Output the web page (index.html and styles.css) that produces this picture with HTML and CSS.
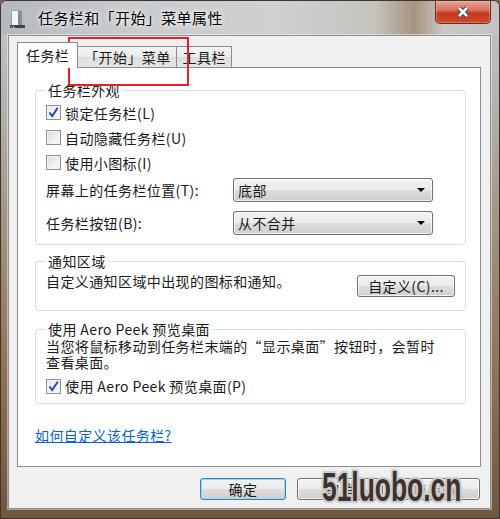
FILE: index.html
```html
<!DOCTYPE html>
<html lang="zh-CN">
<head>
    <meta charset="UTF-8">
    <meta name="viewport" content="width=device-width, initial-scale=1.0">
    <title>任务栏和「开始」菜单属性</title>
    <link rel="stylesheet" href="styles.css">
</head>
<body>
    <div class="window">
        <div class="titlebar">
            <svg class="app-icon" width="15" height="19" viewBox="0 0 15 19">
                <rect x="1.5" y="0.5" width="10" height="15" fill="#f6f6f6" stroke="#a0a0a0"/>
                <rect x="8" y="1" width="3.5" height="14" fill="#8a8a8a"/>
                <rect x="0" y="15" width="15" height="3" fill="#3c434c"/>
                <rect x="1" y="15.5" width="1.5" height="1" fill="#e0522e"/>
                <rect x="3" y="15.5" width="1.5" height="1" fill="#6cbf3a"/>
                <rect x="1" y="17" width="1.5" height="1" fill="#2f8ee0"/>
                <rect x="3" y="17" width="1.5" height="1" fill="#f2c12e"/>
            </svg>
            <span class="title">任务栏和「开始」菜单属性</span>
            <div class="close-btn">
                <svg width="16" height="12" viewBox="0 0 16 12">
                    <path d="M4 2 L12 10 M12 2 L4 10" stroke="#45454f" stroke-width="5"/>
                    <path d="M4 2 L12 10 M12 2 L4 10" stroke="#ffffff" stroke-width="2.6"/>
                </svg>
            </div>
        </div>

        <div class="client">
            <div class="tabs">
                <div class="tab active">任务栏</div>
                <div class="tab">「开始」菜单</div>
                <div class="tab">工具栏</div>
            </div>

            <div class="panel">
                <!-- 任务栏外观 -->
                <fieldset class="group group-look">
                    <legend>任务栏外观</legend>
                    <div class="check-row first">
                        <span class="checkbox checked">
                            <svg width="13" height="13" viewBox="0 0 13 13"><path d="M2.5 6.5 L5.2 10 L10.8 1.8" fill="none" stroke="#2b4c9e" stroke-width="2"/></svg>
                        </span>
                        锁定任务栏(L)
                    </div>
                    <div class="check-row"><span class="checkbox"></span>自动隐藏任务栏(U)</div>
                    <div class="check-row"><span class="checkbox"></span>使用小图标(I)</div>
                    <div class="select-row first">
                        <span>屏幕上的任务栏位置(T):</span>
                        <div class="select"><span>底部</span><i class="arrow"></i></div>
                    </div>
                    <div class="select-row">
                        <span>任务栏按钮(B):</span>
                        <div class="select"><span>从不合并</span><i class="arrow"></i></div>
                    </div>
                </fieldset>

                <!-- 通知区域 -->
                <fieldset class="group group-notify">
                    <legend>通知区域</legend>
                    <div class="notify-row">
                        <span class="notify-text">自定义通知区域中出现的图标和通知。</span>
                        <div class="btn btn-custom">自定义(C)...</div>
                    </div>
                </fieldset>

                <!-- Aero Peek -->
                <fieldset class="group group-peek">
                    <legend>使用 Aero Peek 预览桌面</legend>
                    <p class="peek-desc">当您将鼠标移动到任务栏末端的“显示桌面”按钮时，会暂时<br>查看桌面。</p>
                    <div class="check-row peek-check">
                        <span class="checkbox checked">
                            <svg width="13" height="13" viewBox="0 0 13 13"><path d="M2.5 6.5 L5.2 10 L10.8 1.8" fill="none" stroke="#2b4c9e" stroke-width="2"/></svg>
                        </span>
                        使用 Aero Peek 预览桌面(P)
                    </div>
                </fieldset>

                <a class="help-link" href="#">如何自定义该任务栏?</a>
            </div>

            <div class="dialog-buttons">
                <div class="btn btn-default">确定</div>
                <div class="btn">取消</div>
                <div class="btn btn-disabled">应用(A)</div>
            </div>
        </div>

        <div class="highlight"></div>
        <div class="watermark">51luobo.cn</div>
    </div>
</body>
</html>
```

FILE: styles.css
```css
* {
    margin: 0;
    padding: 0;
    box-sizing: border-box;
}
body {
    width: 500px;
    height: 519px;
    overflow: hidden;
    font-family: "Noto Sans CJK SC", "Liberation Sans", sans-serif;
    font-size: 14px;
    letter-spacing: 0.4px;
    color: #1a1a1a;
    background: #7b6450;
}
.window {
    position: relative;
    width: 500px;
    height: 519px;
    border: 1px solid #3b3530;
    border-radius: 7px 7px 0 0;
    background: linear-gradient(180deg, #c3c6ca 0px, #b9bcbf 60px, #9d8a72 260px, #86694c 420px, #6e5640 519px);
}
.titlebar {
    display: flex;
    align-items: center;
    height: 34px;
    padding-left: 9px;
    border-radius: 6px 6px 0 0;
    background: linear-gradient(90deg, #b4b9bf 0%, #c8cbce 25%, #cfd0d1 55%, #c6c3be 75%, #a69480 83%, #c9c8c4 89%, #c2c3c4 100%);
}
.app-icon {
    margin-top: 2px;
}
.title {
    margin-left: 13px;
    font-size: 15px;
    line-height: 18px;
    color: #000;
    text-shadow: 0 0 6px #fff, 0 0 3px #fff;
}
.close-btn {
    display: flex;
    align-items: center;
    justify-content: center;
    align-self: flex-start;
    margin-left: auto;
    margin-right: 8px;
    width: 56px;
    height: 23px;
    border: 1px solid #6a2b20;
    border-top: none;
    border-radius: 0 0 5px 5px;
    background: linear-gradient(180deg, #e6a394 0%, #d9725e 42%, #c5381e 55%, #cf4a2f 100%);
    box-shadow: inset 0 0 0 1px rgba(255,255,255,0.25);
}
.client {
    display: flex;
    flex-direction: column;
    height: 474px;
    margin: 0 8px 0 7px;
    border: 1px solid #8d8d8d;
    background: #f0f0f0;
    box-shadow: 0 0 0 1px rgba(255,255,255,0.45);
}
.tabs {
    display: flex;
    align-items: flex-end;
    height: 31px;
    padding: 6px 0 0 8px;
}
.tab {
    height: 21px;
    padding: 0 5px 0 6px;
    margin-left: -1px;
    line-height: 20px;
    border: 1px solid #898c95;
    border-bottom: none;
    background: linear-gradient(180deg, #f3f3f3 0%, #ebebeb 50%, #dedede 51%, #e5e5e5 100%);
}
.tab.active {
    position: relative;
    z-index: 1;
    height: 26px;
    margin-left: 0;
    margin-bottom: -1px;
    padding: 0 8px;
    line-height: 24px;
    background: #fff;
}
.panel {
    display: flex;
    flex-direction: column;
    align-items: flex-start;
    height: 400px;
    margin: 0 9px 0 8px;
    padding: 14px 15px 0 17px;
    border: 1px solid #898c95;
    background: #fff;
}
.group {
    width: 431px;
    min-width: 0;
    border: 1px solid #d5dfe5;
    border-radius: 3px;
    padding: 0 10px 9px;
}
.group legend {
    padding: 0 2px;
    line-height: 16px;
}
.check-row {
    display: flex;
    align-items: center;
    gap: 4px;
    height: 25px;
    line-height: 16px;
}
.check-row.first {
    margin-top: 2px;
}
.checkbox {
    display: flex;
    align-items: center;
    justify-content: center;
    width: 15px;
    height: 15px;
    border: 1px solid #8e8f8f;
    background: linear-gradient(135deg, #dcdcdc 0%, #f0f0f0 60%, #fbfbfb 100%);
    box-shadow: inset 0 0 0 1px #f4f4f4;
}
.checkbox.checked {
    background: linear-gradient(135deg, #e6e9ee 0%, #f6f7f9 100%);
}
.select-row {
    display: grid;
    grid-template-columns: 187px 200px;
    align-items: center;
    height: 24px;
    margin-top: 9px;
    line-height: 16px;
}
.select-row.first {
    margin-top: 3px;
}
.select {
    display: flex;
    align-items: center;
    justify-content: space-between;
    height: 24px;
    padding: 0 7px 0 4px;
    border: 1px solid #707070;
    border-radius: 3px;
    background: linear-gradient(180deg, #f2f2f2 0%, #ebebeb 50%, #dddddd 51%, #cfcfcf 100%);
    box-shadow: inset 0 0 0 1px rgba(255,255,255,0.7);
}
.arrow {
    width: 0;
    height: 0;
    border-left: 4px solid transparent;
    border-right: 4px solid transparent;
    border-top: 4px solid #000;
}
.group-notify {
    margin-top: 8px;
    padding-bottom: 13px;
}
.notify-row {
    display: flex;
    justify-content: space-between;
    align-items: flex-start;
}
.notify-text {
    margin-top: 4px;
    line-height: 16px;
}
.btn {
    display: flex;
    align-items: center;
    justify-content: center;
    width: 86px;
    height: 22px;
    line-height: 16px;
    border: 1px solid #707070;
    border-radius: 3px;
    background: linear-gradient(180deg, #f2f2f2 0%, #ebebeb 50%, #dddddd 51%, #cfcfcf 100%);
    box-shadow: inset 0 0 0 1px rgba(255,255,255,0.7);
}
.btn-custom {
    width: 98px;
    margin-top: 6px;
}
.group-peek {
    margin-top: 10px;
    padding-bottom: 5px;
}
.peek-desc {
    margin-top: 1px;
    line-height: 16px;
}
.peek-check {
    height: 24px;
    margin-top: 4px;
}
.help-link {
    margin-top: 23px;
    line-height: 16px;
    color: #0c5fcc;
    text-decoration: underline;
}
.dialog-buttons {
    display: flex;
    justify-content: flex-end;
    gap: 11px;
    margin-top: 11px;
    padding-right: 10px;
}
.btn-default {
    border-color: #3c7fb1;
    box-shadow: inset 0 0 0 1px #9fd6f3;
}
.btn-disabled {
    color: #a0a0a0;
}
.highlight {
    position: absolute;
    left: 67px;
    top: 36px;
    width: 121px;
    height: 49px;
    border: 2px solid #e5202a;
}
.watermark {
    position: absolute;
    left: 321px;
    top: 464px;
    font-family: "Liberation Sans", sans-serif;
    font-weight: bold;
    font-size: 40px;
    line-height: 44px;
    letter-spacing: 0;
    color: #3a3330;
    transform: scaleX(0.66);
    transform-origin: left center;
    text-shadow: 2px 0 0 #d2ccc8, -2px 0 0 #d2ccc8, 0 2px 0 #d2ccc8, 0 -2px 0 #d2ccc8,
                 2px 2px 0 #d2ccc8, -2px -2px 0 #d2ccc8, 2px -2px 0 #d2ccc8, -2px 2px 0 #d2ccc8,
                 0 0 4px #8a827e;
}
```
